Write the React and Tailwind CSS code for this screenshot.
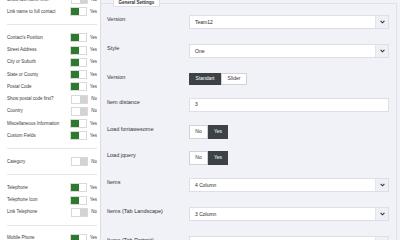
import React from "react";

const groups = [
  [["Show last name first?", false], ["Link name to full contact", true]],
  [
    ["Contact's Position", true],
    ["Street Address", true],
    ["City or Suburb", true],
    ["State or County", true],
    ["Postal Code", true],
    ["Show postal code first?", false],
    ["Country", false],
    ["Miscellaneous Information", true],
    ["Custom Fields", true],
  ],
  [["Category", false]],
  [["Telephone", true], ["Telephone Icon", true], ["Link Telephone", false]],
  [["Mobile Phone", true]],
];

function Toggle({ on }) {
  return (
    <div className="flex h-[9px] w-[17px] shrink-0 border border-[#d9d9d9] bg-white">
      {on ? (
        <>
          <div className="w-[8px] bg-[#2d7a2f]" />
          <div className="flex-1 bg-white" />
        </>
      ) : (
        <>
          <div className="w-[8px] bg-white" />
          <div className="flex-1 bg-[#d3d3d3]" />
        </>
      )}
    </div>
  );
}

function LeftRow({ label, on }) {
  return (
    <div className="flex h-[12.25px] items-center pl-[7px]">
      <div className="w-[66px] whitespace-nowrap text-[4.5px] leading-[6px] text-[#3a3a3a]">{label}</div>
      <Toggle on={on} />
      <div className="ml-[3px] whitespace-nowrap text-[4.5px] leading-[6px] text-[#3a3a3a]">{on ? "Yes" : "No"}</div>
    </div>
  );
}

function Chevron() {
  return (
    <div className="flex h-full w-[13px] items-center justify-center border-l border-[#e2e4ea] bg-[#eef0f4]">
      <svg width="5" height="4" viewBox="0 0 5 4">
        <path d="M0.6 0.8 L2.5 2.8 L4.4 0.8" fill="none" stroke="#333" strokeWidth="1.1" />
      </svg>
    </div>
  );
}

function Select({ value }) {
  return (
    <div className="flex h-[14px] flex-1 items-center border border-[#dcdfe6] bg-white">
      <div className="flex-1 pl-[5px] text-[5px] leading-[6px] text-[#2a2a2a]">{value}</div>
      <Chevron />
    </div>
  );
}

function Row({ label, mt, children }) {
  return (
    <div className={`flex items-start ${mt}`}>
      <div className="w-[82px] shrink-0 pt-[1px] text-[5.5px] leading-[7px] text-[#333]">{label}</div>
      <div className="flex flex-1">{children}</div>
    </div>
  );
}

function YesNo() {
  return (
    <div className="flex h-[14px]">
      <div className="flex w-[19px] items-center justify-center border border-[#cfd2d8] bg-white text-[5px] text-[#333]">No</div>
      <div className="flex w-[20px] items-center justify-center bg-[#3d4247] text-[5px] text-white">Yes</div>
    </div>
  );
}

export default function App() {
  return (
    <div className="flex h-[240px] w-[400px] overflow-hidden bg-[#f1f1f8] font-['Liberation_Sans',Arial,sans-serif]">
      <div className="w-[101px] shrink-0 overflow-hidden border-r border-[#dcdce4] bg-white">
        <div className="-mt-[6.4px] w-[97px] overflow-hidden">
          {groups.map((g, gi) => (
            <div key={gi}>
              {gi > 0 && (
                <div className="flex h-[13.75px] items-center pl-[7px]">
                  <div className="w-full border-t border-[#e6e6e6]" />
                </div>
              )}
              {g.map(([l, on]) => (
                <LeftRow key={l} label={l} on={on} />
              ))}
            </div>
          ))}
        </div>
      </div>
      <div className="flex-1 pr-[3px]">
        <div className="relative mt-[3px] h-[300px] border-t border-r border-[#dfe0ea] pl-[6px] pr-[7px]">
          <div className="absolute -top-[6px] left-[12px] flex h-[9px] w-[47px] items-end justify-center border border-[#dfe0ea] bg-white pb-[1px] text-[4.5px] font-bold leading-[5px] text-[#333]">
            General Settings
          </div>
          <Row label="Version" mt="mt-[11px]">
            <Select value="Team12" />
          </Row>
          <Row label="Style" mt="mt-[15px]">
            <Select value="One" />
          </Row>
          <Row label="Version" mt="mt-[15px]">
            <div className="flex h-[12px]">
              <div className="flex w-[32px] items-center justify-center bg-[#3d4247] text-[5px] text-white">Standart</div>
              <div className="flex w-[26px] items-center justify-center border border-[#cfd2d8] bg-white text-[5px] text-[#333]">Slider</div>
            </div>
          </Row>
          <Row label="Item distance" mt="mt-[13px]">
            <div className="flex h-[14px] flex-1 items-center border border-[#dcdfe6] bg-white pl-[5px] text-[5px] text-[#2a2a2a]">3</div>
          </Row>
          <Row label="Load fontawesome" mt="mt-[13px]">
            <YesNo />
          </Row>
          <Row label="Load jquery" mt="mt-[12px]">
            <YesNo />
          </Row>
          <Row label="Items" mt="mt-[13px]">
            <Select value="4 Column" />
          </Row>
          <Row label="Items (Tab Landscape)" mt="mt-[15px]">
            <Select value="3 Column" />
          </Row>
          <Row label="Items (Tab Portrait)" mt="mt-[15px]">
            <Select value="2 Column" />
          </Row>
        </div>
      </div>
    </div>
  );
}
